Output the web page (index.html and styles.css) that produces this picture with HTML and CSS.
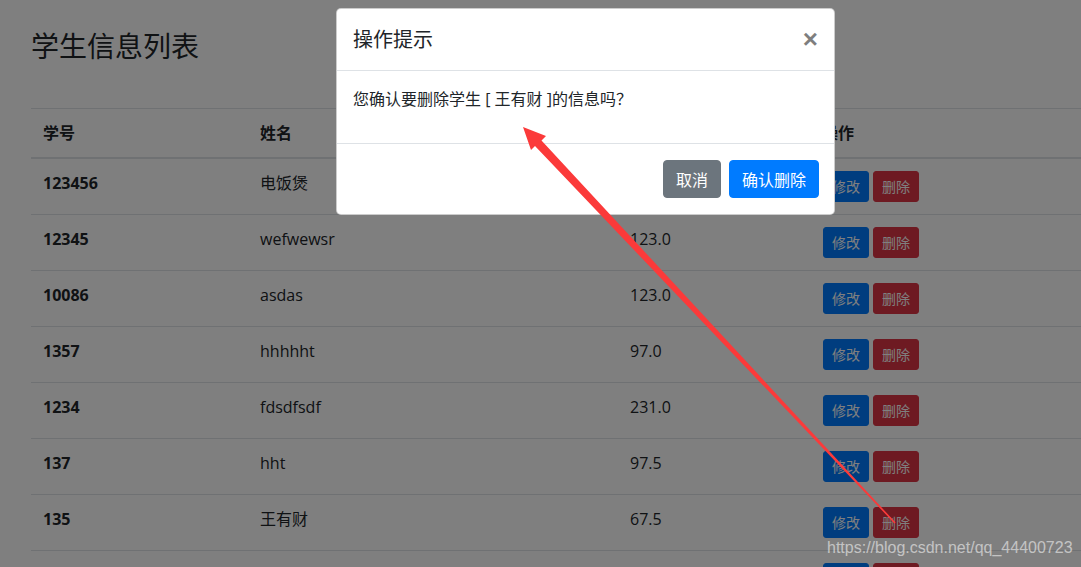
FILE: index.html
```html
<!DOCTYPE html>
<html lang="zh-CN">
<head>
<meta charset="utf-8">
<title>学生信息列表</title>
<link rel="stylesheet" href="styles.css">
</head>
<body>
<div class="page">
  <h3 class="title">学生信息列表</h3>
  <table class="table">
    <colgroup>
      <col class="c1"><col class="c2"><col class="c3"><col class="c4">
    </colgroup>
    <thead>
      <tr><th>学号</th><th>姓名</th><th>成绩</th><th>操作</th></tr>
    </thead>
    <tbody>
      <tr><th>123456</th><td>电饭煲</td><td>100.0</td><td><div class="ops"><span class="btn btn-sm btn-primary">修改</span><span class="btn btn-sm btn-danger">删除</span></div></td></tr>
      <tr><th>12345</th><td>wefwewsr</td><td>123.0</td><td><div class="ops"><span class="btn btn-sm btn-primary">修改</span><span class="btn btn-sm btn-danger">删除</span></div></td></tr>
      <tr><th>10086</th><td>asdas</td><td>123.0</td><td><div class="ops"><span class="btn btn-sm btn-primary">修改</span><span class="btn btn-sm btn-danger">删除</span></div></td></tr>
      <tr><th>1357</th><td>hhhhht</td><td>97.0</td><td><div class="ops"><span class="btn btn-sm btn-primary">修改</span><span class="btn btn-sm btn-danger">删除</span></div></td></tr>
      <tr><th>1234</th><td>fdsdfsdf</td><td>231.0</td><td><div class="ops"><span class="btn btn-sm btn-primary">修改</span><span class="btn btn-sm btn-danger">删除</span></div></td></tr>
      <tr><th>137</th><td>hht</td><td>97.5</td><td><div class="ops"><span class="btn btn-sm btn-primary">修改</span><span class="btn btn-sm btn-danger">删除</span></div></td></tr>
      <tr><th>135</th><td>王有财</td><td>67.5</td><td><div class="ops"><span class="btn btn-sm btn-primary">修改</span><span class="btn btn-sm btn-danger">删除</span></div></td></tr>
      <tr class="partial"><th></th><td></td><td></td><td><div class="ops"><span class="btn btn-sm btn-primary btn-blank"></span><span class="btn btn-sm btn-danger btn-blank"></span></div></td></tr>
    </tbody>
  </table>
</div>

<div class="backdrop"></div>

<div class="modal">
  <div class="modal-header">
    <h5 class="modal-title">操作提示</h5>
    <span class="close">×</span>
  </div>
  <div class="modal-body">
    <p>您确认要删除学生 [ 王有财 ]的信息吗？</p>
  </div>
  <div class="modal-footer">
    <span class="btn btn-secondary">取消</span>
    <span class="btn btn-primary">确认删除</span>
  </div>
</div>

<svg class="arrow" width="1081" height="567" viewBox="0 0 1081 567">
  <polygon fill="#fb3a3a" points="523,127 546,136 541.5,140.5 895.6,522.6 894.4,523.4 535,146 531,150"/>
</svg>

<div class="watermark">https://blog.csdn.net/qq_44400723</div>
</body>
</html>
```

FILE: styles.css
```css
* { box-sizing: border-box; }

html, body {
  margin: 0;
  padding: 0;
  width: 1081px;
  height: 567px;
  overflow: hidden;
  background: #fff;
}

body {
  position: relative;
  font-family: "Open Sans", "Noto Sans CJK SC", sans-serif;
  font-size: 16px;
  line-height: 24px;
  color: #212529;
}

.page {
  padding: 28px 0 0 31px;
}

.title {
  margin: 0 0 46px;
  font-size: 28px;
  font-weight: 400;
  line-height: 34px;
  font-family: "Noto Sans CJK SC", sans-serif;
}

.table {
  width: 1100px;
  border-collapse: collapse;
  table-layout: fixed;
}

.c1 { width: 217px; }
.c2 { width: 370px; }
.c3 { width: 192px; }
.c4 { width: 321px; }

.table th,
.table td {
  padding: 12px;
  text-align: left;
  vertical-align: top;
  line-height: 24px;
  border-top: 1px solid #dee2e6;
}

.table th { font-weight: 700; }
.table td { font-weight: 400; }

.table thead th {
  border-bottom: 2px solid #dee2e6;
}

.ops {
  display: flex;
  gap: 4px;
  padding-left: 1px;
}

.btn {
  display: inline-block;
  font-family: "Noto Sans CJK SC", sans-serif;
  font-size: 16px;
  line-height: 24px;
  padding: 6px 12px;
  border: 1px solid transparent;
  border-radius: 4px;
  color: #fff;
  white-space: nowrap;
}

.btn-sm {
  font-size: 14px;
  line-height: 21px;
  padding: 4px 8px;
  border-radius: 3px;
}

.btn-blank {
  width: 46px;
  height: 31px;
}

.btn-primary { background: #007bff; border-color: #007bff; }
.btn-danger { background: #dc3545; border-color: #dc3545; }
.btn-secondary { background: #6c757d; border-color: #6c757d; }

.backdrop {
  position: absolute;
  inset: 0;
  background: rgba(0, 0, 0, 0.5);
}

.modal {
  position: absolute;
  left: 336px;
  top: 8px;
  width: 499px;
  background: #fff;
  border: 1px solid rgba(0, 0, 0, 0.2);
  border-radius: 5px;
}

.modal-header {
  display: flex;
  align-items: flex-start;
  padding: 15px 16px 16px;
  border-bottom: 1px solid #dee2e6;
}

.modal-title {
  margin: 0;
  font-size: 20px;
  font-weight: 400;
  line-height: 30px;
  font-family: "Noto Sans CJK SC", sans-serif;
}

.close {
  margin-left: auto;
  margin-right: 0;
  font-family: "Liberation Sans", sans-serif;
  font-size: 26px;
  font-weight: 700;
  line-height: 30px;
  color: #000;
  opacity: 0.5;
}

.modal-body {
  padding: 16px;
}

.modal-body p {
  margin: 0 0 16px;
  line-height: 24px;
}

.modal-footer {
  display: flex;
  justify-content: flex-end;
  padding: 12px;
  border-top: 1px solid #dee2e6;
}

.modal-footer .btn {
  margin: 4px;
  height: 38px;
}

.modal-footer .btn:last-child {
  margin-right: 3px;
}

.arrow {
  position: absolute;
  left: 0;
  top: 0;
}

.watermark {
  position: absolute;
  left: 827px;
  top: 537px;
  font-family: "Liberation Sans", sans-serif;
  font-size: 16px;
  line-height: 22px;
  color: rgba(255, 255, 255, 0.55);
  letter-spacing: 0;
}
```
